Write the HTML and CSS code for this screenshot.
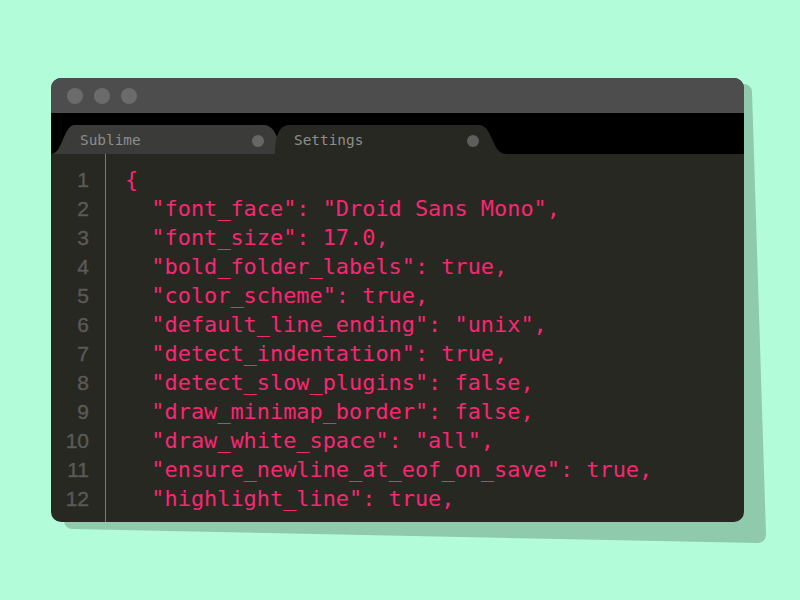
FILE: index.html
```html
<!DOCTYPE html>
<html lang="en">
<head>
  <meta charset="UTF-8">
  <title>Sublime Settings</title>
  <link rel="stylesheet" href="styles.css">
</head>
<body>
  <div class="stage">
    <svg class="shadow" width="730" height="480" viewBox="0 0 730 480">
      <polygon points="21,14 693,14 707,457 21,443" fill="#8fcaad" stroke="#8fcaad" stroke-width="16" stroke-linejoin="round"/>
    </svg>
    <div class="window">
      <div class="titlebar">
        <span class="light"></span>
        <span class="light"></span>
        <span class="light"></span>
      </div>
      <div class="tabbar">
        <div class="tab tab-back">
          <span class="tab-name">Sublime</span>
          <span class="tab-dot"></span>
        </div>
        <div class="tab tab-active">
          <span class="tab-name">Settings</span>
          <span class="tab-dot"></span>
        </div>
      </div>
      <div class="editor">
        <div class="gutter">
          <div>1</div><div>2</div><div>3</div><div>4</div><div>5</div><div>6</div>
          <div>7</div><div>8</div><div>9</div><div>10</div><div>11</div><div>12</div>
        </div>
        <div class="code">
          <div class="line">{</div>
          <div class="line">  "font_face": "Droid Sans Mono",</div>
          <div class="line">  "font_size": 17.0,</div>
          <div class="line">  "bold_folder_labels": true,</div>
          <div class="line">  "color_scheme": true,</div>
          <div class="line">  "default_line_ending": "unix",</div>
          <div class="line">  "detect_indentation": true,</div>
          <div class="line">  "detect_slow_plugins": false,</div>
          <div class="line">  "draw_minimap_border": false,</div>
          <div class="line">  "draw_white_space": "all",</div>
          <div class="line">  "ensure_newline_at_eof_on_save": true,</div>
          <div class="line">  "highlight_line": true,</div>
        </div>
      </div>
    </div>
  </div>
</body>
</html>
```

FILE: styles.css
```css
body {
  margin: 0;
  padding: 78px 0 0 51px;
  background-color: #b3fcda;
  min-height: 600px;
  box-sizing: border-box;
  overflow: hidden;
}
.stage {
  position: relative;
  width: 693px;
}
.shadow {
  position: absolute;
  left: 0;
  top: 0;
  overflow: visible;
}
.window {
  position: relative;
  width: 693px;
  height: 444px;
  border-radius: 10px;
  overflow: hidden;
  background-color: #272822;
  display: flex;
  flex-direction: column;
}
.titlebar {
  flex-shrink: 0;
  height: 35px;
  background-color: #4d4d4d;
  display: flex;
  align-items: center;
  gap: 11px;
  padding: 1px 0 0 16px;
  box-sizing: border-box;
}
.light {
  width: 16px;
  height: 16px;
  border-radius: 50%;
  background-color: #6b6b6b;
}
.tabbar {
  flex-shrink: 0;
  height: 41px;
  background-color: #000;
  display: flex;
  align-items: flex-end;
}
.tab {
  height: 29px;
  display: flex;
  align-items: center;
  box-sizing: border-box;
  font-family: "DejaVu Sans Mono", monospace;
  font-size: 14.4px;
  color: #8e8e8c;
}
.tab-back {
  width: 242px;
  padding: 0 29px 0 29px;
  background-color: #3b3b39;
  clip-path: path('M0 29 C12 29 12 0 24 0 L212 0 C222 0 224 8 228 16 C232 26 236 29 242 29 Z');
}
.tab-active {
  width: 232px;
  margin-left: -18px;
  padding: 0 28px 0 19px;
  background-color: #272822;
  clip-path: path('M0 29 C0 12 4 0 14 0 L203 0 C212 0 214 8 218 16 C222 26 226 29 232 29 Z');
}
.tab-dot {
  margin-left: auto;
  margin-top: 2px;
  width: 12px;
  height: 12px;
  border-radius: 50%;
  background-color: #5e5e5c;
}
.tab-back .tab-dot {
  background-color: #676767;
}
.editor {
  flex: 1;
  display: flex;
  line-height: 29px;
}
.gutter {
  width: 55px;
  padding: 11px 16px 0 0;
  box-sizing: border-box;
  text-align: right;
  font-family: "Liberation Sans", Arial, sans-serif;
  font-size: 21px;
  color: #5a5a57;
  border-right: 1px solid #7a7a78;
  -webkit-text-stroke: 0.4px #5a5a57;
}
.code {
  padding: 11px 0 0 19px;
  font-family: "DejaVu Sans Mono", monospace;
  font-size: 21.9px;
  color: #f92672;
}
.line {
  white-space: pre;
}
```
